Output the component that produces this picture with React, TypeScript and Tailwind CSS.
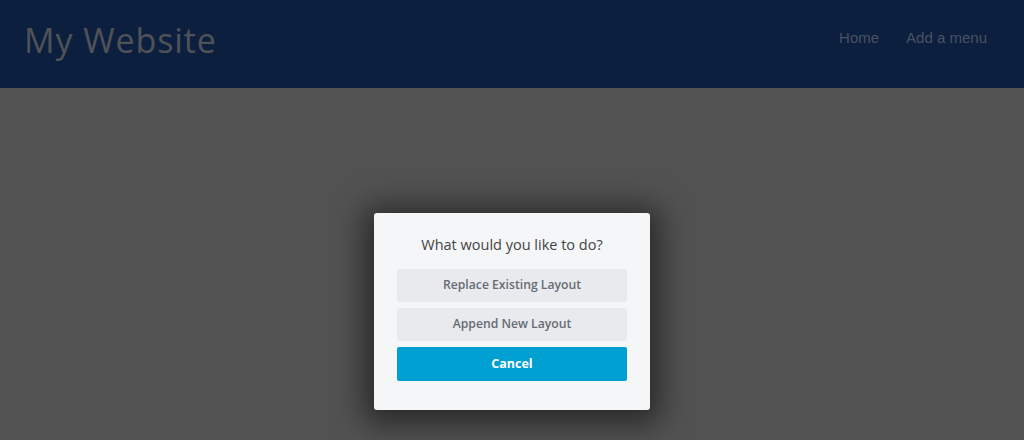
export default function App() {
  return (
    <div className="relative h-[440px] w-full overflow-hidden bg-[#525252]">
      {/* Header */}
      <header className="flex h-[88px] items-center justify-between bg-[#0c1f3f] pl-[24px] pr-[37px]">
        <h1 className="pb-[8px] text-[34px] font-normal tracking-[0.9px] text-[#4f5257] [font-family:'Open_Sans',sans-serif]">
          My Website
        </h1>
        <nav className="flex gap-[27px] pb-[12px] text-[15px] text-[#4b5160] [font-family:'Liberation_Sans',Arial,sans-serif]">
          <span>Home</span>
          <span>Add a menu</span>
        </nav>
      </header>

      {/* Modal */}
      <div className="absolute left-[374px] top-[213px] flex w-[276px] flex-col rounded-[3px] bg-[#f5f6f8] px-[23px] pb-[29px] pt-[22px] shadow-[0_4px_30px_10px_rgba(0,0,0,0.5)] [font-family:'Open_Sans',sans-serif]">
        <p className="mb-[14px] text-center text-[14.5px] leading-[20px] text-[#444]">What would you like to do?</p>
        <div className="flex flex-col gap-[6px]">
          <button className="h-[33px] rounded-[2px] bg-[#e8eaee] text-[12.2px] font-semibold text-[#666c74]">
            Replace Existing Layout
          </button>
          <button className="h-[33px] rounded-[2px] bg-[#e8eaee] text-[12.2px] font-semibold text-[#666c74]">
            Append New Layout
          </button>
          <button className="h-[34px] rounded-[2px] bg-[#00a0d2] text-[12.5px] font-bold text-white">
            Cancel
          </button>
        </div>
      </div>
    </div>
  );
}
